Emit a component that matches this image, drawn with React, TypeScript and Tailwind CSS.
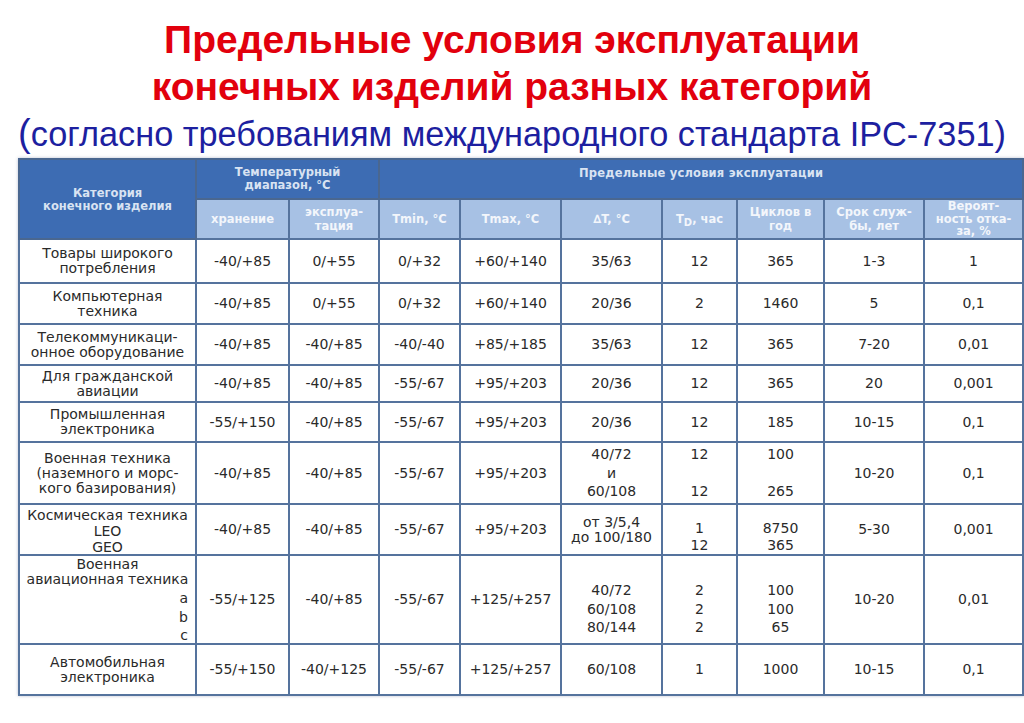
import React from 'react';

type Row = {
  h: number;
  cat: React.ReactNode;
  cells: React.ReactNode[];
};

const BODY_FONT = { fontFamily: '"DejaVu Sans", Verdana, sans-serif' };

// stacked lines inside a clipped box of fixed height
function Stack({ lines, h, lh = 'leading-[18.5px]', shift = '' }: { lines: string[]; h: number; lh?: string; shift?: string }) {
  return (
    <div className={`flex flex-col justify-center items-center overflow-hidden ${lh} ${shift}`} style={{ height: h }}>
      {lines.map((l, i) => (
        <div key={i} className="whitespace-nowrap">{l || '\u00a0'}</div>
      ))}
    </div>
  );
}

const Cat = ({ lines }: { lines: string[] }) => (
  <div className="flex flex-col items-center leading-[15px]">
    {lines.map((l, i) => (
      <div key={i} className="whitespace-nowrap">{l}</div>
    ))}
  </div>
);

const rows: Row[] = [
  { h: 44, cat: <Cat lines={['Товары широкого', 'потребления']} />, cells: ['-40/+85', '0/+55', '0/+32', '+60/+140', '35/63', '12', '365', '1-3', '1'] },
  { h: 41, cat: <Cat lines={['Компьютерная', 'техника']} />, cells: ['-40/+85', '0/+55', '0/+32', '+60/+140', '20/36', '2', '1460', '5', '0,1'] },
  { h: 41, cat: <Cat lines={['Телекоммуникаци-', 'онное оборудование']} />, cells: ['-40/+85', '-40/+85', '-40/-40', '+85/+185', '35/63', '12', '365', '7-20', '0,01'] },
  { h: 37, cat: <Cat lines={['Для гражданской', 'авиации']} />, cells: ['-40/+85', '-40/+85', '-55/-67', '+95/+203', '20/36', '12', '365', '20', '0,001'] },
  { h: 40, cat: <Cat lines={['Промышленная', 'электроника']} />, cells: ['-55/+150', '-40/+85', '-55/-67', '+95/+203', '20/36', '12', '185', '10-15', '0,1'] },
  {
    h: 62,
    cat: <Cat lines={['Военная техника', '(наземного и морс-', 'кого базирования)']} />,
    cells: [
      '-40/+85', '-40/+85', '-55/-67', '+95/+203',
      <Stack lines={['40/72', 'и', '60/108']} h={60} />,
      <Stack lines={['12', '', '12']} h={60} />,
      <Stack lines={['100', '', '265']} h={60} />,
      '10-20', '0,1',
    ],
  },
  {
    h: 51,
    cat: <Stack lines={['Космическая техника', 'LEO', 'GEO']} h={49} lh="leading-[16px]" shift="pt-[3px]" />,
    cells: [
      '-40/+85', '-40/+85', '-55/-67', '+95/+203',
      <Stack lines={['от 3/5,4', 'до 100/180']} h={49} lh="leading-[15px]" />,
      <Stack lines={['1', '12']} h={49} lh="leading-[17px]" shift="pt-[15px]" />,
      <Stack lines={['8750', '365']} h={49} lh="leading-[17px]" shift="pt-[15px]" />,
      '5-30', '0,001',
    ],
  },
  {
    h: 89,
    cat: (
      <div className="flex flex-col h-[87px] pt-[1px]">
        <div className="leading-[15px] text-center whitespace-nowrap">Военная</div>
        <div className="leading-[15px] text-center whitespace-nowrap">авиационная техника</div>
        <div className="mt-[2px] leading-[18.5px] text-right pr-[7px]">
          <div>a</div>
          <div>b</div>
          <div>c</div>
        </div>
      </div>
    ),
    cells: [
      '-55/+125', '-40/+85', '-55/-67', '+125/+257',
      <Stack lines={['40/72', '60/108', '80/144']} h={87} shift="pt-[19px]" />,
      <Stack lines={['2', '2', '2']} h={87} shift="pt-[19px]" />,
      <Stack lines={['100', '100', '65']} h={87} shift="pt-[19px]" />,
      '10-20', '0,01',
    ],
  },
  { h: 51, cat: <Cat lines={['Автомобильная', 'электроника']} />, cells: ['-55/+150', '-40/+125', '-55/-67', '+125/+257', '60/108', '1', '1000', '10-15', '0,1'] },
];

const widths = [177, 93, 90, 81, 101, 101, 75, 87, 100, 99];

const sub = [
  ['хранение'],
  ['эксплуа-', 'тация'],
  ['Tmin, °C'],
  ['Tmax, °C'],
  ['∆T, °C'],
  null,
  ['Циклов в', 'год'],
  ['Срок служ-', 'бы, лет'],
  ['Вероят-', 'ность отка-', 'за, %'],
];

export default function App() {
  return (
    <div className="w-[1024px] h-[723px] bg-white overflow-hidden">
      <div className="flex flex-col items-center pt-[16px]" style={{ fontFamily: '"Liberation Sans", Arial, sans-serif' }}>
        <div className="text-[39px] leading-[47px] font-bold text-[#e2000d] whitespace-nowrap">Предельные условия эксплуатации</div>
        <div className="text-[39px] leading-[47px] font-bold text-[#e2000d] whitespace-nowrap">конечных изделий разных категорий</div>
        <div className="mt-[1px] text-[34.3px] leading-[45px] text-[#1d1fa0] whitespace-nowrap">
          <span className="text-[38px]">(</span>согласно требованиям международного стандарта IPC-7351)
        </div>
      </div>

      <table className="mt-[1px] ml-[18px] w-[1004px] table-fixed border-collapse text-[14px] text-[#2a2a2a] shadow-[0_0_3px_rgba(60,80,120,0.35)]" style={BODY_FONT}>
        <colgroup>
          {widths.map((w, i) => (
            <col key={i} style={{ width: w }} />
          ))}
        </colgroup>
        <thead className="text-[11.5px] font-bold">
          <tr className="h-[40px]">
            <th rowSpan={2} className="bg-[#3d6cb3] text-[#d9e3f2] border-2 border-[#4a6790] leading-[13px] font-bold">
              <div className="pt-[2px]">Категория</div>
              <div>конечного изделия</div>
            </th>
            <th colSpan={2} className="bg-[#3d6cb3] text-[#d9e3f2] border-2 border-[#4a6790] leading-[13px] font-bold">
              <div>Температурный</div>
              <div>диапазон, °C</div>
            </th>
            <th colSpan={7} className="bg-[#3e6db4] text-[#d9e3f2] border-2 border-[#4a6790] align-top pt-[7px] leading-[13px] font-bold tracking-[0.2px]">
              Предельные условия эксплуатации
            </th>
          </tr>
          <tr className="h-[40px]">
            {sub.map((s, i) => (
              <th key={i} className="bg-[#a7c1e4] text-[#f3f6fb] border-2 border-[#55739d] font-bold p-0">
                <div className={`h-[38px] flex flex-col justify-center items-center overflow-hidden ${i === 8 ? 'leading-[12.5px]' : 'leading-[14px]'}`}>
                  {s ? (
                    s.map((l, j) => (
                      <div key={j} className="whitespace-nowrap">{l}</div>
                    ))
                  ) : (
                    <div className="whitespace-nowrap">
                      T<sub className="text-[10px]">D</sub>, час
                    </div>
                  )}
                </div>
              </th>
            ))}
          </tr>
        </thead>
        <tbody>
          {rows.map((r, i) => (
            <tr key={i} style={{ height: r.h }}>
              <td className="border-2 border-[#55739d] text-center p-0 overflow-hidden">{r.cat}</td>
              {r.cells.map((c, j) => (
                <td key={j} className="border-2 border-[#55739d] text-center p-0 whitespace-nowrap overflow-hidden">
                  {c}
                </td>
              ))}
            </tr>
          ))}
        </tbody>
      </table>
    </div>
  );
}
